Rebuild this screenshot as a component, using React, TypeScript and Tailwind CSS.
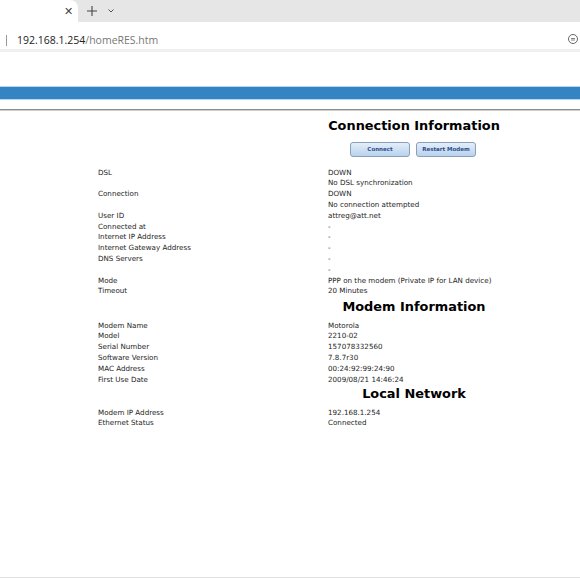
import React from 'react';

type Row = [string, string];

const connRows: Row[] = [
  ['DSL', 'DOWN'],
  ['', 'No DSL synchronization'],
  ['Connection', 'DOWN'],
  ['', 'No connection attempted'],
  ['User ID', 'attreg@att.net'],
  ['Connected at', '-'],
  ['Internet IP Address', '-'],
  ['Internet Gateway Address', '-'],
  ['DNS Servers', '-'],
  ['', '-'],
  ['Mode', 'PPP on the modem (Private IP for LAN device)'],
  ['Timeout', '20 Minutes'],
];

const modemRows: Row[] = [
  ['Modem Name', 'Motorola'],
  ['Model', '2210-02'],
  ['Serial Number', '157078332560'],
  ['Software Version', '7.8.7r30'],
  ['MAC Address', '00:24:92:99:24:90'],
  ['First Use Date', '2009/08/21 14:46:24'],
];

const lanRows: Row[] = [
  ['Modem IP Address', '192.168.1.254'],
  ['Ethernet Status', 'Connected'],
];

const Rows = ({ rows }: { rows: Row[] }) => (
  <div className="flex flex-col">
    {rows.map(([label, value], i) => (
      <div key={i} className="flex h-[10.8px] leading-[10.8px] text-[7.15px] text-[#1e1e1e]">
        <span className="w-[230px] whitespace-nowrap">{label}</span>
        <span className="whitespace-nowrap">{value}</span>
      </div>
    ))}
  </div>
);

const Heading = ({ title, h, lh }: { title: string; h: string; lh: string }) => (
  <div className={`flex ${h}`}>
    <div className="w-[230px]" />
    <div className={`w-[172px] text-center font-bold text-[12.9px] text-black whitespace-nowrap ${lh}`}>
      {title}
    </div>
  </div>
);

export default function App() {
  return (
    <div className="w-[580px] h-[580px] overflow-hidden bg-white flex flex-col font-['DejaVu_Sans',sans-serif]">
      {/* tab strip */}
      <div className="h-[22px] bg-[#e6e6e6] flex items-stretch shrink-0">
        <div className="w-[78px] bg-white rounded-tr-[8px] flex items-center justify-end pr-[5px]">
          <span className="text-[11px] text-[#444] font-['Liberation_Sans',sans-serif] leading-none">✕</span>
        </div>
        <div className="flex items-center pl-[8px] gap-[9px]">
          <svg width="12" height="12" viewBox="0 0 12 12">
            <path d="M6 1v10M1 6h10" stroke="#444" strokeWidth="1.1" />
          </svg>
          <svg width="8" height="6" viewBox="0 0 8 6">
            <path d="M1.5 1.5L4 4l2.5-2.5" stroke="#555" strokeWidth="1" fill="none" />
          </svg>
        </div>
      </div>
      {/* address bar */}
      <div className="h-[30px] bg-white flex items-center border-b-[3px] border-[#f0f0f0] shrink-0 relative pt-[10px]">
        <div className="ml-[6px] w-[1px] h-[11px] bg-[#999]" />
        <div className="ml-[10px] text-[10.5px] font-['Open_Sans',sans-serif] text-[#222] whitespace-nowrap">
          192.168.1.254<span className="text-[#777]">/homeRES.htm</span>
        </div>
        <svg className="absolute left-[567px] top-[11px]" width="12" height="12" viewBox="0 0 12 12">
          <circle cx="6" cy="6" r="4.5" stroke="#666" strokeWidth="1" fill="none" />
          <path d="M4 5.5h4M4 7h4" stroke="#666" strokeWidth="0.8" />
        </svg>
      </div>
      {/* page */}
      <div className="flex-1 flex flex-col pt-[34px]">
        <div className="h-[1px] bg-[#b8d6ee]" />
        <div className="h-[12px] bg-[#3484c4]" />
        <div className="h-[1px] bg-[#b8d6ee]" />
        <div className="h-[9px]" />
        <div className="h-[1px] bg-[#8c8c8c]" />
        <div className="h-[1px] bg-[#cfcfcf]" />
        <div className="ml-[98px] flex flex-col">
          <Heading title="Connection Information" h="h-[30px]" lh="leading-[30px]" />
          <div className="flex mt-[1px]">
            <div className="w-[230px]" />
            <div className="w-[170px] flex justify-center gap-[6px]">
              <button className="w-[60px] h-[15px] rounded-[3px] border border-[#8a9fb8] bg-gradient-to-b from-[#e4eefa] to-[#b8d2ee] text-[5.5px] font-bold text-[#2d4f86] leading-none">
                Connect
              </button>
              <button className="w-[60px] h-[15px] rounded-[3px] border border-[#8a9fb8] bg-gradient-to-b from-[#e4eefa] to-[#b8d2ee] text-[5.5px] font-bold text-[#2d4f86] leading-none">
                Restart Modem
              </button>
            </div>
          </div>
          <div className="h-[10.6px]" />
          <Rows rows={connRows} />
          <Heading title="Modem Information" h="h-[23.4px]" lh="leading-[19.6px]" />
          <Rows rows={modemRows} />
          <Heading title="Local Network" h="h-[22.2px]" lh="leading-[17.2px]" />
          <Rows rows={lanRows} />
        </div>
        <div className="flex-1" />
        <div className="h-[1px] bg-[#e2e2e2]" />
        <div className="h-[2px] bg-white" />
      </div>
    </div>
  );
}
